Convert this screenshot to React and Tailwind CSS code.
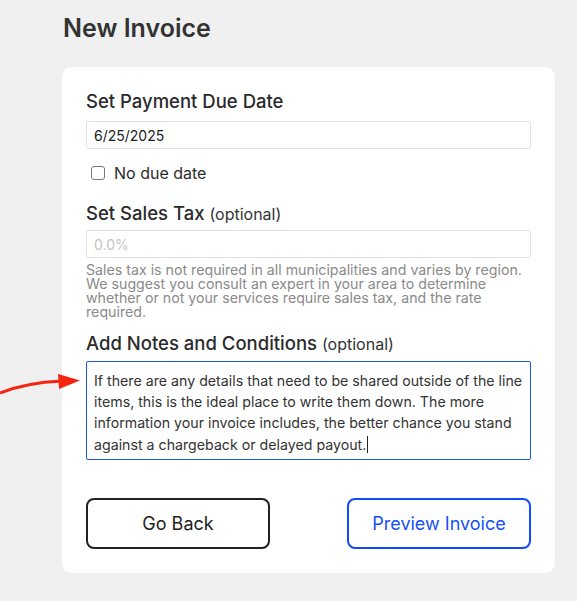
export default function App() {
  return (
    <div
      className="relative min-h-[601px] w-[577px] bg-[#f0f0f0] text-[#2b2b2b]"
      style={{ fontFamily: 'Inter, "Noto Sans", sans-serif' }}
    >
      <div className="ml-[62px] w-[493px] pt-[11px]">
        <h1 className="pl-[1px] text-[25px] font-semibold leading-[34px] text-[#333]">New Invoice</h1>
        <div className="mt-[22px] rounded-[10px] bg-white px-[24px] pb-[24px] pt-[22px]">
          <h2 className="text-[18.5px] font-medium leading-[24px]">Set Payment Due Date</h2>
          <div className="mt-[8px] flex h-[28px] items-center rounded-[2px] border border-[#e2e2e2] px-[7px] text-[14px] text-[#222]">
            6/25/2025
          </div>
          <label className="mt-[12px] flex h-[24px] items-center gap-[9px] pl-[5px] text-[16px] text-[#2b2b2b]">
            <span className="block h-[14px] w-[14px] rounded-[3px] border border-[#777] bg-white" />
            No due date
          </label>
          <h2 className="mt-[16px] text-[18.5px] font-medium leading-[24px]">
            Set Sales Tax <span className="text-[16px] font-normal text-[#333]">(optional)</span>
          </h2>
          <div className="mt-[4px] flex h-[28px] items-center rounded-[2px] border border-[#e2e2e2] px-[7px] text-[14px] text-[#c4c4c4]">
            0.0%
          </div>
          <p className="mt-[5px] text-[14.2px] leading-[14px] text-[#8a8a8a]">
            Sales tax is not required in all municipalities and varies by region. We suggest you consult an expert in your area to determine whether or not your services require sales tax, and the rate required.
          </p>
          <h2 className="mt-[12px] text-[18.5px] font-medium leading-[24px]">
            Add Notes and Conditions <span className="text-[16px] font-normal text-[#333]">(optional)</span>
          </h2>
          <div className="mt-[5px] h-[99px] whitespace-nowrap rounded-[2px] border border-[#1a56f0] px-[7px] pt-[8px] text-[14.2px] leading-[21px] text-[#333]">
            If there are any details that need to be shared outside of the line
            <br />
            items, this is the ideal place to write them down. The more
            <br />
            information your invoice includes, the better chance you stand
            <br />
            against a chargeback or delayed payout.
            <span className="ml-[1px] inline-block h-[17px] w-[1px] translate-y-[3px] bg-[#222]" />
          </div>
          <div className="mt-[38px] flex justify-between">
            <button className="h-[51px] w-[184px] rounded-[8px] border-2 border-[#222] bg-white text-[18px] text-[#222]">
              Go Back
            </button>
            <button className="h-[51px] w-[184px] rounded-[8px] border-2 border-[#0d4dff] bg-white text-[18px] text-[#1450f5]">
              Preview Invoice
            </button>
          </div>
        </div>
      </div>
      <svg className="absolute left-0 top-[368px]" width="84" height="30" viewBox="0 0 84 30">
        <path d="M0 25 C 20 17, 40 14, 62 13" stroke="#f5230f" strokeWidth="3" fill="none" />
        <polygon points="58,6 80,12.5 59,21" fill="#f5230f" />
      </svg>
    </div>
  );
}
